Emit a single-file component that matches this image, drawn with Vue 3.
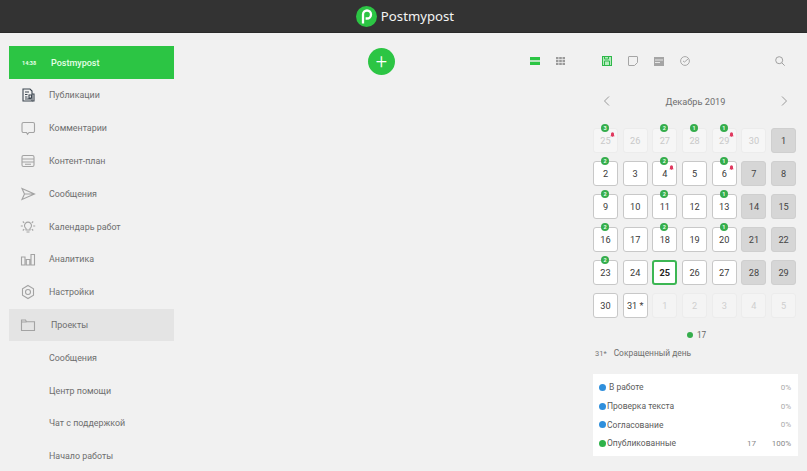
<script setup>
const nav = [
  { t: 'Публикации', i: 'pub' },
  { t: 'Комментарии', i: 'com' },
  { t: 'Контент-план', i: 'plan' },
  { t: 'Сообщения', i: 'msg' },
  { t: 'Календарь работ', i: 'bulb' },
  { t: 'Аналитика', i: 'bars' },
  { t: 'Настройки', i: 'gear' },
  { t: 'Проекты', i: 'folder', sel: true },
  { t: 'Сообщения' },
  { t: 'Центр помощи' },
  { t: 'Чат с поддержкой' },
  { t: 'Начало работы' }
]
const badge = { '0': '3', '2': '2', '3': '1', '4': '1', '7': '2', '9': '2', '11': '1', '14': '2', '16': '2', '18': '1', '21': '2', '23': '2', '25': '1', '28': '2' }
const bell = [0, 4, 9, 11]
const labels = [25, 26, 27, 28, 29, 30, 1, 2, 3, 4, 5, 6, 7, 8, 9, 10, 11, 12, 13, 14, 15, 16, 17, 18, 19, 20, 21, 22, 23, 24, 25, 26, 27, 28, 29, 30, '31 *', 1, 2, 3, 4, 5]
const cells = labels.map((n, idx) => {
  let k = 'day'
  if (idx < 6) k = 'faded'
  else if (idx > 36) k = 'next'
  else if (idx === 6 || (idx - 5) % 7 === 0 || (idx - 6) % 7 === 0) k = 'off'
  if (idx === 30) k = 'day today'
  return { n, k, b: badge[idx], bell: bell.includes(idx) }
})
const stats = [
  { t: 'В работе', c: '#2f8fdc', n: '', p: '0%', wide: true },
  { t: 'Проверка текста', c: '#2f8fdc', n: '', p: '0%' },
  { t: 'Согласование', c: '#2f8fdc', n: '', p: '0%' },
  { t: 'Опубликованные', c: '#2fb24a', n: '17', p: '100%' }
]
</script>

<template>
  <div class="page">
    <header class="top">
      <svg class="logo" width="21" height="21" viewBox="0 0 21 21">
        <circle cx="10.5" cy="10.5" r="10.5" fill="#2cc544" />
        <path d="M7 17.5V8.5a4 4 0 1 1 4 4H9.6" fill="none" stroke="#fff" stroke-width="2.3" />
      </svg>
      <span class="brand">Postmypost</span>
    </header>
    <div class="body">
      <aside class="side">
        <div class="active"><span class="clock">14:38</span><span>Postmypost</span></div>
        <div v-for="item in nav" :key="item.t + item.i" class="item" :class="{ sel: item.sel }">
          <span class="ico">
            <svg v-if="item.i" width="16" height="16" viewBox="0 0 16 16" fill="none" :stroke="item.i === 'pub' ? '#3c4650' : '#a3a3a3'" stroke-width="1.1">
              <template v-if="item.i === 'pub'">
                <path d="M3 2h7l2 2v10H3z" /><path d="M5 5h4M5 7.5h2.5M5 10h2.5M5 12h6M9 8h2.5v3H9z" /><path d="M12 7h2v7h-2" />
              </template>
              <path v-else-if="item.i === 'com'" d="M3.5 2.5h9.500a1.500 1.500 0 0 1 1.500 1.500v7a1.500 1.500 0 0 1-1.500 1.500H9l-1.500 1.800-1-1.800h-3A1.500 1.500 0 0 1 2 11V4a1.500 1.500 0 0 1 1.500-1.500z" />
              <template v-else-if="item.i === 'plan'">
                <rect x="2" y="2.500" width="12" height="11" rx="1.500" /><path d="M2 6h12M2 9h12M5 11.200h6" />
              </template>
              <path v-else-if="item.i === 'msg'" d="M2 2.500 14.500 8 2 13.500 4.500 8zM4.500 8h10" />
              <template v-else-if="item.i === 'bulb'">
                <path d="M6 11V9.500A3.500 3.500 0 1 1 10 9.500V11zM6.500 13h3M0.800 7h2M13.200 7h2M2.800 2.500l1.400 1.300M13.200 2.500l-1.400 1.300M2.800 11.500l1.400-1.300M13.200 11.500l-1.400-1.300" />
              </template>
              <path v-else-if="item.i === 'bars'" d="M1.500 6h3.500v8h-3.500zM6.300 8.500h3.500V14H6.300zM11 3.500h3.500V14H11z" />
              <template v-else-if="item.i === 'gear'">
                <path d="M8 1.500 13.500 4.700v6.600L8 14.500 2.500 11.300V4.700z" /><circle cx="8" cy="8" r="2.500" />
              </template>
              <path v-else-if="item.i === 'folder'" d="M1.500 3h4l1 1.800h8v8.700h-13zM1.500 5h5" />
            </svg>
          </span>
          <span class="label">{{ item.t }}</span>
        </div>
      </aside>

      <main class="center">
        <button class="plus">+</button>
        <svg class="v1" width="10" height="8" viewBox="0 0 10 8"><rect width="10" height="3.300" fill="#2cc544" /><rect y="4.700" width="10" height="3.300" fill="#2cc544" /></svg>
        <svg class="v2" width="9" height="8" viewBox="0 0 9 8" fill="#9a9a9a"><path d="M0 0h2.500v2.300H0zM3.200 0h2.600v2.300H3.200zM6.500 0H9v2.300H6.500zM0 2.900h2.500v2.200H0zM3.200 2.900h2.600v2.200H3.200zM6.500 2.900H9v2.200H6.500zM0 5.700h2.500V8H0zM3.200 5.700h2.600V8H3.200zM6.500 5.700H9V8H6.500z" /></svg>
      </main>

      <section class="right">
        <div class="tabs">
          <svg width="10" height="10" viewBox="0 0 10 10" fill="none" stroke="#2fb84a"><rect x=".5" y=".5" width="9" height="9" fill="#b6ecbf" /><path d="M2.500 5h5v4.500h-5zM2.500.5h4v2.500h-4z" /></svg>
          <svg class="gap" width="10" height="10" viewBox="0 0 10 10" fill="none" stroke="#a5a5a5"><path d="M1 .5h8a.5.5 0 0 1 .5.5v5.500l-3 3H1a.5.5 0 0 1-.5-.5V1A.5.5 0 0 1 1 .5z" /></svg>
          <svg class="gap" width="10" height="9" viewBox="0 0 10 9"><rect width="10" height="9" fill="#a5a5a5" /><path d="M1 3h8M1 5.500h5" stroke="#e6e6e6" /></svg>
          <svg class="gap" width="10" height="10" viewBox="0 0 10 10" fill="none" stroke="#a8a8a8"><circle cx="5" cy="5" r="4.400" /><path d="m3 5 1.500 1L8 3" /></svg>
          <svg class="search" width="10" height="10" viewBox="0 0 10 10" fill="none" stroke="#a0a0a0"><circle cx="4.200" cy="4.200" r="3.500" /><path d="m6.800 6.800 2.900 2.900" /></svg>
        </div>
        <div class="month">
          <svg width="7" height="10" viewBox="0 0 7 10" fill="none" stroke="#999"><path d="M6 .5 1.500 5 6 9.500" /></svg>
          <span>Декабрь 2019</span>
          <svg width="7" height="10" viewBox="0 0 7 10" fill="none" stroke="#999"><path d="M1 .5 5.500 5 1 9.500" /></svg>
        </div>
        <div class="grid">
          <div v-for="(c, idx) in cells" :key="idx" class="cell" :class="c.k">
            {{ c.n }}
            <span v-if="c.b" class="badge">{{ c.b }}</span>
            <svg v-if="c.bell" class="bell" width="5" height="5" viewBox="0 0 5 5"><path d="M.3 4.200 1 3.300V1.800a1.500 1.500 0 0 1 3 0v1.500l.7.9zM1.800 4.400h1.400v.6H1.800z" fill="#e0395f" /></svg>
          </div>
        </div>
        <div class="total"><i></i><span>17</span></div>
        <div class="short"><small>31*</small><span>Сокращенный день</span></div>
        <div class="card">
          <div v-for="s in stats" :key="s.t" class="row">
            <i :style="{ background: s.c }"></i>
            <span class="name" :class="{ wide: s.wide }">{{ s.t }}</span>
            <span class="num">{{ s.n }}</span>
            <span class="pct">{{ s.p }}</span>
          </div>
        </div>
      </section>
    </div>
  </div>
</template>

<style scoped>
.page { width: 807px; height: 471px; overflow: hidden; background: #f1f1f1; font-family: Roboto, "Noto Sans", sans-serif; color: #555; }
.top { height: 32px; background: #333; border-bottom: 1px solid #2a2a2a; display: flex; align-items: center; justify-content: center; gap: 4px; }
.logo { margin-left: 3px; }
.brand { color: #f4f4f4; font-size: 13.200px; font-family: "Noto Sans", sans-serif; }
.body { display: flex; height: 438px; }
.side { width: 165px; margin: 13px 0 0 9px; flex: none; }
.active { height: 33px; background: #2cc544; color: #e4ffe6; display: flex; align-items: center; font-size: 9px; font-weight: 500; }
.clock { font-size: 5.500px; font-weight: 700; width: 42px; padding-left: 13px; box-sizing: border-box; }
.item { height: 32.800px; display: flex; align-items: center; font-size: 8.900px; color: #6e6e6e; }
.item.sel { background: #e4e4e4; }
.ico { width: 40px; padding-left: 11px; box-sizing: border-box; display: flex; align-items: center; }
.sel .label { margin-left: 2px; }
.center { width: 419px; flex: none; display: flex; align-items: center; height: 26px; margin-top: 15px; }
.plus { width: 27px; height: 27px; border-radius: 50%; border: 0; padding: 0; background: #2cc544; color: #fff; font: 300 20px/26px Roboto, sans-serif; margin-left: 194px; }
.v1 { margin-left: 135px; }
.v2 { margin-left: 16px; }
.right { width: 205px; flex: none; }
.tabs { display: flex; align-items: center; height: 26px; margin-top: 15px; padding-left: 9px; }
.gap { margin-left: 16px; }
.search { margin-left: 85px; }
.month { display: flex; align-items: center; justify-content: space-between; height: 20px; margin-top: 17px; padding: 0 10px; font-size: 9.200px; color: #6e6e6e; }
.grid { display: grid; grid-template-columns: repeat(7, 25px); grid-auto-rows: 25px; column-gap: 4.700px; row-gap: 8px; margin-top: 17px; }
.cell { position: relative; box-sizing: border-box; border: 1px solid #c8c8c8; border-radius: 3px; background: #fff; display: flex; align-items: center; justify-content: center; font-size: 9.200px; color: #3a3a3a; }
.faded { background: #f6f6f6; border-color: #ececec; color: #c9c9c9; }
.next { background: #f4f4f4; border-color: #ececec; color: #cfcfcf; }
.off { background: #d6d6d6; border-color: #cfcfcf; color: #444; }
.today { border: 2px solid #3cb653; font-weight: 700; color: #222; }
.badge { position: absolute; top: -5px; left: 50%; margin-left: -4.500px; width: 8px; height: 8px; border-radius: 50%; background: #35ad4c; color: #e8ffe8; font-size: 5.500px; line-height: 8px; text-align: center; font-weight: 700; }
.bell { position: absolute; top: 3px; right: 2px; }
.total { display: flex; align-items: center; justify-content: center; gap: 4px; margin-top: 11px; height: 12px; font-size: 8.200px; color: #666; padding-left: 2px; }
.total i { width: 6px; height: 6px; border-radius: 50%; background: #35ad4c; }
.short { display: flex; align-items: center; gap: 7px; height: 12px; margin-top: 6px; margin-left: 2px; font-size: 8.400px; color: #6e6e6e; }
.short small { font-size: 7.500px; color: #777; }
.card { background: #fff; margin-top: 15px; height: 82px; box-sizing: border-box; padding: 4px 7px 0 6px; }
.row { height: 18.700px; display: flex; align-items: center; font-size: 8.500px; color: #5c5c5c; }
.row i { width: 7px; height: 7px; border-radius: 50%; flex: none; }
.name { margin-left: 1px; flex: 1; }
.name.wide { margin-left: 3px; }
.num { font-size: 8px; color: #888; width: 24px; }
.pct { width: 20px; text-align: right; font-size: 8px; color: #aaa; white-space: nowrap; }
.row:last-child .pct { color: #888; }
</style>
